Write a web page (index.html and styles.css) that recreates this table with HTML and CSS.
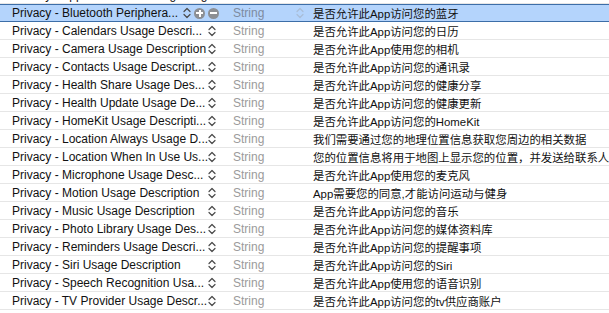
FILE: index.html
```html
<!DOCTYPE html>
<html lang="zh-CN">
  <head>
    <meta charset="UTF-8" />
    <title>Info.plist</title>
    <link rel="stylesheet" href="styles.css">
  </head>
  <body>
    <div class="plist">
      <div class="row">
        <div class="key"><span class="name">Privacy - AppleEvents Sending Usage Description</span><svg class="stepper" viewBox="0 0 8 12"><path d="M1 4.5 4 1.5 7 4.5M1 7.5 4 10.5 7 7.5"/></svg></div>
        <div class="type"></div>
        <div class="value"></div>
      </div>

      <div class="row selected">
        <div class="key">
          <span class="name">Privacy - Bluetooth Periphera...</span>
          <svg class="stepper" viewBox="0 0 8 12"><path d="M1 4.5 4 1.5 7 4.5M1 7.5 4 10.5 7 7.5"/></svg>
          <span class="btn plus"></span>
          <span class="btn minus"></span>
        </div>
        <div class="type">String<svg class="stepper light" viewBox="0 0 8 12"><path d="M1 4.5 4 1.5 7 4.5M1 7.5 4 10.5 7 7.5"/></svg></div>
        <div class="value">是否允许此App访问您的蓝牙</div>
      </div>

      <div class="row">
        <div class="key"><span class="name">Privacy - Calendars Usage Descri...</span><svg class="stepper" viewBox="0 0 8 12"><path d="M1 4.5 4 1.5 7 4.5M1 7.5 4 10.5 7 7.5"/></svg></div>
        <div class="type">String</div>
        <div class="value">是否允许此App访问您的日历</div>
      </div>
      <div class="row">
        <div class="key"><span class="name">Privacy - Camera Usage Description</span><svg class="stepper" viewBox="0 0 8 12"><path d="M1 4.5 4 1.5 7 4.5M1 7.5 4 10.5 7 7.5"/></svg></div>
        <div class="type">String</div>
        <div class="value">是否允许此App使用您的相机</div>
      </div>
      <div class="row">
        <div class="key"><span class="name">Privacy - Contacts Usage Descript...</span><svg class="stepper" viewBox="0 0 8 12"><path d="M1 4.5 4 1.5 7 4.5M1 7.5 4 10.5 7 7.5"/></svg></div>
        <div class="type">String</div>
        <div class="value">是否允许此App访问您的通讯录</div>
      </div>
      <div class="row">
        <div class="key"><span class="name">Privacy - Health Share Usage Des...</span><svg class="stepper" viewBox="0 0 8 12"><path d="M1 4.5 4 1.5 7 4.5M1 7.5 4 10.5 7 7.5"/></svg></div>
        <div class="type">String</div>
        <div class="value">是否允许此App访问您的健康分享</div>
      </div>
      <div class="row">
        <div class="key"><span class="name">Privacy - Health Update Usage De...</span><svg class="stepper" viewBox="0 0 8 12"><path d="M1 4.5 4 1.5 7 4.5M1 7.5 4 10.5 7 7.5"/></svg></div>
        <div class="type">String</div>
        <div class="value">是否允许此App访问您的健康更新</div>
      </div>
      <div class="row">
        <div class="key"><span class="name">Privacy - HomeKit Usage Descripti...</span><svg class="stepper" viewBox="0 0 8 12"><path d="M1 4.5 4 1.5 7 4.5M1 7.5 4 10.5 7 7.5"/></svg></div>
        <div class="type">String</div>
        <div class="value">是否允许此App访问您的HomeKit</div>
      </div>
      <div class="row">
        <div class="key"><span class="name">Privacy - Location Always Usage D...</span><svg class="stepper" viewBox="0 0 8 12"><path d="M1 4.5 4 1.5 7 4.5M1 7.5 4 10.5 7 7.5"/></svg></div>
        <div class="type">String</div>
        <div class="value">我们需要通过您的地理位置信息获取您周边的相关数据</div>
      </div>
      <div class="row">
        <div class="key"><span class="name">Privacy - Location When In Use Us...</span><svg class="stepper" viewBox="0 0 8 12"><path d="M1 4.5 4 1.5 7 4.5M1 7.5 4 10.5 7 7.5"/></svg></div>
        <div class="type">String</div>
        <div class="value">您的位置信息将用于地图上显示您的位置，并发送给联系人</div>
      </div>
      <div class="row">
        <div class="key"><span class="name">Privacy - Microphone Usage Desc...</span><svg class="stepper" viewBox="0 0 8 12"><path d="M1 4.5 4 1.5 7 4.5M1 7.5 4 10.5 7 7.5"/></svg></div>
        <div class="type">String</div>
        <div class="value">是否允许此App使用您的麦克风</div>
      </div>
      <div class="row">
        <div class="key"><span class="name">Privacy - Motion Usage Description</span><svg class="stepper" viewBox="0 0 8 12"><path d="M1 4.5 4 1.5 7 4.5M1 7.5 4 10.5 7 7.5"/></svg></div>
        <div class="type">String</div>
        <div class="value">App需要您的同意,才能访问运动与健身</div>
      </div>
      <div class="row">
        <div class="key"><span class="name">Privacy - Music Usage Description</span><svg class="stepper" viewBox="0 0 8 12"><path d="M1 4.5 4 1.5 7 4.5M1 7.5 4 10.5 7 7.5"/></svg></div>
        <div class="type">String</div>
        <div class="value">是否允许此App访问您的音乐</div>
      </div>
      <div class="row">
        <div class="key"><span class="name">Privacy - Photo Library Usage Des...</span><svg class="stepper" viewBox="0 0 8 12"><path d="M1 4.5 4 1.5 7 4.5M1 7.5 4 10.5 7 7.5"/></svg></div>
        <div class="type">String</div>
        <div class="value">是否允许此App访问您的媒体资料库</div>
      </div>
      <div class="row">
        <div class="key"><span class="name">Privacy - Reminders Usage Descri...</span><svg class="stepper" viewBox="0 0 8 12"><path d="M1 4.5 4 1.5 7 4.5M1 7.5 4 10.5 7 7.5"/></svg></div>
        <div class="type">String</div>
        <div class="value">是否允许此App访问您的提醒事项</div>
      </div>
      <div class="row">
        <div class="key"><span class="name">Privacy - Siri Usage Description</span><svg class="stepper" viewBox="0 0 8 12"><path d="M1 4.5 4 1.5 7 4.5M1 7.5 4 10.5 7 7.5"/></svg></div>
        <div class="type">String</div>
        <div class="value">是否允许此App访问您的Siri</div>
      </div>
      <div class="row">
        <div class="key"><span class="name">Privacy - Speech Recognition Usa...</span><svg class="stepper" viewBox="0 0 8 12"><path d="M1 4.5 4 1.5 7 4.5M1 7.5 4 10.5 7 7.5"/></svg></div>
        <div class="type">String</div>
        <div class="value">是否允许此App使用您的语音识别</div>
      </div>
      <div class="row">
        <div class="key"><span class="name">Privacy - TV Provider Usage Descr...</span><svg class="stepper" viewBox="0 0 8 12"><path d="M1 4.5 4 1.5 7 4.5M1 7.5 4 10.5 7 7.5"/></svg></div>
        <div class="type">String</div>
        <div class="value">是否允许此App访问您的tv供应商账户</div>
      </div>
    </div>
  </body>
</html>
```

FILE: styles.css
```css
/* Plist editor, Xcode style */
body {
  margin: 0;
  width: 609px;
  height: 313px;
  overflow: hidden;
  background: #fff;
  font-family: "Liberation Sans", Arial, "Noto Sans CJK SC", sans-serif;
  font-size: 12px;
  color: #111;
}

.plist {
  margin-top: -14px;
}

.row {
  display: grid;
  grid-template-columns: 221px 80px 1fr;
  align-items: center;
  height: 18px;
  box-sizing: border-box;
  border-bottom: 1px solid #e6e6e6;
  white-space: nowrap;
}

.key {
  display: flex;
  align-items: center;
  padding-left: 12px;
  overflow: hidden;
}

.name {
  width: 196px;
  overflow: hidden;
}

.stepper {
  width: 8px;
  height: 12px;
  flex: none;
  fill: none;
  stroke: #4a4a4a;
  stroke-width: 1.2px;
  stroke-linecap: round;
  stroke-linejoin: round;
}

.type {
  display: flex;
  align-items: center;
  padding-left: 12px;
  color: #9b9b9b;
}

.value {
  padding-left: 12px;
  font-size: 11.4px;
  overflow: hidden;
}

/* --- Selected row --- */
.row.selected {
  background: #b4d4fc;
  border-top: 1px solid #3d6ea8;
  border-bottom: 1px solid #3d6ea8;
}

.row.selected .name {
  width: 167px;
}

.row.selected .key .stepper {
  margin-left: 4px;
}

.row.selected .type {
  color: #7d8ba0;
}

.stepper.light {
  margin-left: 32px;
  stroke: #a9bdd6;
}

.btn {
  flex: none;
  position: relative;
  width: 11px;
  height: 11px;
  border-radius: 50%;
  background: #8c8f94;
  margin-left: 3px;
}

.btn:before,
.btn.plus:after {
  content: "";
  position: absolute;
  background: #fff;
  left: 2px;
  top: 4.5px;
  width: 7px;
  height: 2px;
}

.btn.plus:after {
  left: 4.5px;
  top: 2px;
  width: 2px;
  height: 7px;
}
```
